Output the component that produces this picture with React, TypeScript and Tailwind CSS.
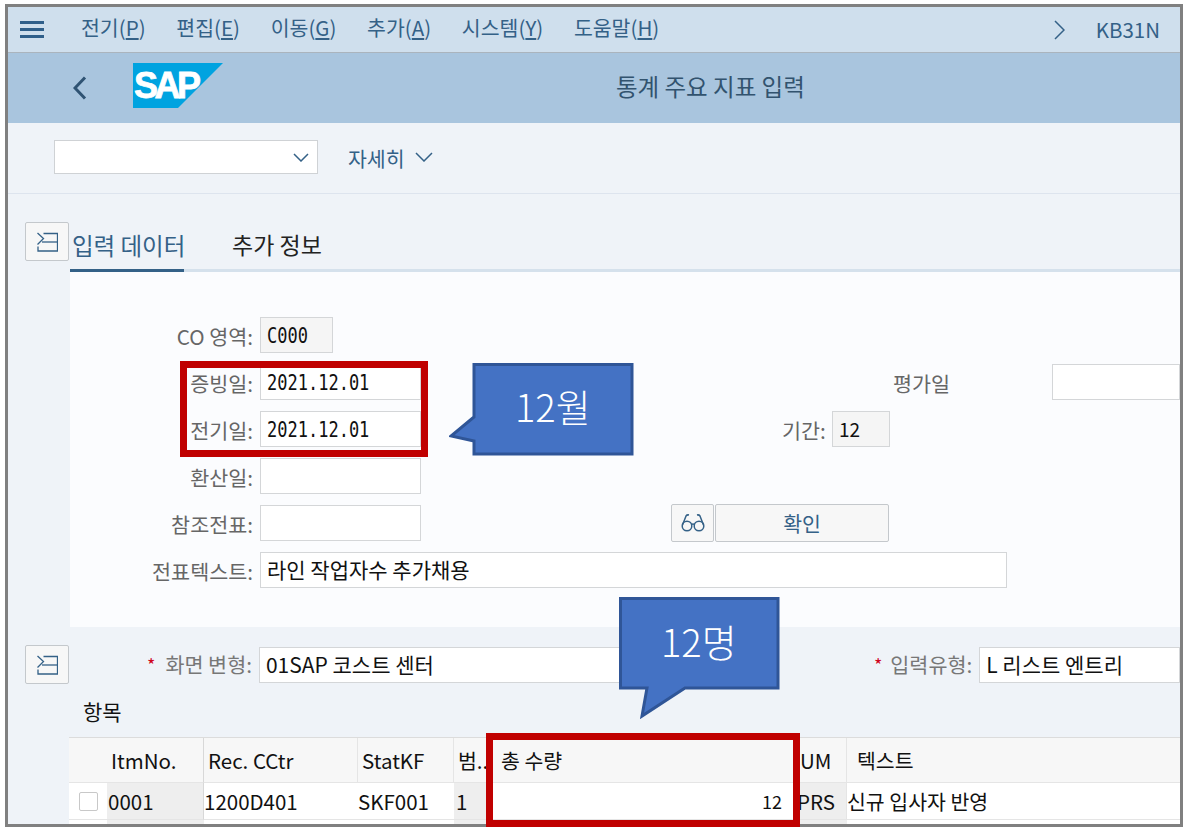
import React from "react";

const Toggle = () => (
  <button className="ml-[17px] flex h-[39px] w-[44px] shrink-0 items-center justify-center rounded-[2px] border border-[#c4c8cc] bg-[#f7f7f7]">
    <svg width="21" height="20" viewBox="0 0 21 20" fill="none" stroke="#346187" strokeWidth="1.3">
      <path d="M0.5 1L6.5 6.5L0.5 12.5" />
      <path d="M6.5 1.5H20.5V19H1V14.5" />
      <path d="M5 10H20.5" />
    </svg>
  </button>
);

const Label = ({ children, w = "w-[183px]" }: { children: React.ReactNode; w?: string }) => (
  <span className={`${w} shrink-0 whitespace-nowrap pt-[3px] text-right text-[20.7px] leading-none text-[#666666]`}>{children}</span>
);

const Input = ({ children, w, ro, mono }: { children?: React.ReactNode; w: string; ro?: boolean; mono?: boolean }) => (
  <div
    className={`${w} ml-[7px] flex h-[36px] shrink-0 items-center overflow-hidden border border-[#d4d6d8] px-[6px] text-[#111111] ${ro ? "bg-[#f5f5f5]" : "bg-white"} ${
      mono ? "font-['DejaVu_Sans_Mono',monospace] text-[17px]" : "text-[21px]"
    }`}
  >
    {mono ? <span className="inline-block translate-y-[2px] scale-y-[1.25]">{children}</span> : children}
  </div>
);

const Menu = ({ name, k }: { name: string; k: string }) => (
  <span className="whitespace-nowrap">
    {name}(<span className="underline">{k}</span>)
  </span>
);

const Chevron = ({ w, h, c = "#346187", sw = 1.5 }: { w: number; h: number; c?: string; sw?: number }) => (
  <svg width={w} height={h} viewBox={`0 0 ${w} ${h}`} fill="none" stroke={c} strokeWidth={sw}>
    <path d={`M1 1L${w / 2} ${h - 1}L${w - 1} 1`} />
  </svg>
);

const Cell = ({ children, cls = "" }: { children?: React.ReactNode; cls?: string }) => (
  <div className={`flex items-center overflow-hidden whitespace-nowrap border-b border-[#e5e5e5] ${cls}`}>{children}</div>
);

const Callout = ({ cls, w, h, points, text, textCls }: { cls: string; w: number; h: number; points: string; text: string; textCls: string }) => (
  <div className={`absolute ${cls}`} style={{ width: w, height: h }}>
    <svg width={w} height={h} className="absolute left-0 top-0">
      <polygon points={points} fill="#4472c4" stroke="#2f5597" strokeWidth="3" />
    </svg>
    <span className={`absolute whitespace-nowrap text-[38px] font-light leading-none text-white ${textCls}`}>{text}</span>
  </div>
);

export default function App() {
  return (
    <div className="relative h-[829px] w-[1184px] overflow-hidden bg-white pb-[2px] pl-[5px] pr-[1px] pt-[4px] font-['Noto_Sans_CJK_KR','Noto_Sans',sans-serif]">
      <div className="flex h-full flex-col overflow-hidden border-[3px] border-[#808080] bg-[#eff3f8]">
        {/* menu bar */}
        <div className="flex h-[46px] shrink-0 items-center border-b border-[#aab4bd] bg-[#cfdfed] text-[20.5px] text-[#346187]">
          <div className="ml-[12px] flex h-[17px] w-[24px] flex-col justify-between">
            <div className="h-[3px] bg-[#2f5f8a]" />
            <div className="h-[3px] bg-[#2f5f8a]" />
            <div className="h-[3px] bg-[#2f5f8a]" />
          </div>
          <div className="ml-[37px] flex gap-[30.7px] pb-[5px]">
            <Menu name="전기" k="P" />
            <Menu name="편집" k="E" />
            <Menu name="이동" k="G" />
            <Menu name="추가" k="A" />
            <Menu name="시스템" k="Y" />
            <Menu name="도움말" k="H" />
          </div>
          <svg className="ml-auto" width="11" height="20" viewBox="0 0 11 20" fill="none" stroke="#346187" strokeWidth="1.5">
            <path d="M1 1l9 9-9 9" />
          </svg>
          <span className="ml-[31px] mr-[20px] text-[20.5px]">KB31N</span>
        </div>
        {/* title bar */}
        <div className="flex h-[70px] shrink-0 items-center bg-[#a9c5de]">
          <svg className="ml-[65px]" width="14" height="24" viewBox="0 0 14 24" fill="none" stroke="#2f5373" strokeWidth="3">
            <path d="M12 1.5L2 12l10 10.5" />
          </svg>
          <svg className="ml-[46px] mb-[5px]" width="90" height="45" viewBox="0 0 90 45">
            <polygon points="0,0 90,0 45,45 0,45" fill="#00a3e0" />
            <text x="1" y="35" fontFamily="'Liberation Sans',sans-serif" fontWeight="700" fontSize="36" letterSpacing="-3.5" stroke="#ffffff" strokeWidth="0.8" fill="#ffffff">SAP</text>
          </svg>
          <span className="mb-[2px] ml-[393px] whitespace-nowrap text-[23.5px] text-[#32536e]">통계 주요 지표 입력</span>
        </div>
        {/* toolbar */}
        <div className="flex h-[71px] shrink-0 items-center border-b border-[#dde4ee] pb-[2px]">
          <div className="ml-[46px] flex h-[34px] w-[264px] items-center justify-end border border-[#cfd2d5] bg-white pr-[8px]">
            <Chevron w={16} h={9} />
          </div>
          <span className="ml-[30px] pt-[2px] text-[20.5px] text-[#346187]">자세히</span>
          <span className="ml-[10px]">
            <Chevron w={18} h={10} />
          </span>
        </div>
        {/* form */}
        <div className="flex shrink-0 pt-[28px]">
          <div className="w-[62px] shrink-0">
            <Toggle />
          </div>
          <div className="min-w-0 flex-1">
            <div className="flex h-[50px] items-center border-b-[3px] border-[#d5e1ec] text-[23px]">
              <div className="-mb-[3px] flex h-[50px] w-[114px] items-center whitespace-nowrap border-b-[3px] border-[#346187] pl-[2px] text-[23.5px] text-[#346187]">입력 데이터</div>
              <div className="mb-[2px] ml-[48px] whitespace-nowrap text-[#222222]">추가 정보</div>
            </div>
            <div className="flex h-[355px] flex-col gap-[11px] bg-[#fbfcfe] pt-[45px]">
              <div className="flex h-[36px] items-center">
                <Label>CO 영역:</Label>
                <Input w="w-[73px]" ro mono>C000</Input>
              </div>
              <div className="flex h-[36px] items-center">
                <Label>증빙일:</Label>
                <Input w="w-[161px]" mono>2021.12.01</Input>
                <span className="ml-[472px] w-[55px] shrink-0 whitespace-nowrap pt-[3px] text-[20.7px] leading-none text-[#666666]">평가일</span>
                <div className="ml-[104px] h-[36px] flex-1 border border-[#d4d6d8] bg-white" />
              </div>
              <div className="flex h-[36px] items-center">
                <Label>전기일:</Label>
                <Input w="w-[161px]" mono>2021.12.01</Input>
                <span className="ml-[361px] w-[43px] shrink-0 whitespace-nowrap pt-[3px] text-[20.7px] leading-none text-[#666666]">기간:</span>
                <Input w="w-[58px]" ro>
                  <span className="text-[19px]">12</span>
                </Input>
              </div>
              <div className="flex h-[36px] items-center">
                <Label>환산일:</Label>
                <Input w="w-[161px]" />
              </div>
              <div className="flex h-[36px] items-center">
                <Label>참조전표:</Label>
                <Input w="w-[161px]" />
                <button className="ml-[250px] flex h-[38px] w-[43px] items-center justify-center rounded-[2px] border border-[#c4c8cc] bg-[#f7f7f7]">
                  <svg width="24" height="20" viewBox="0 0 24 20" fill="none" stroke="#346187" strokeWidth="1.5">
                    <circle cx="6" cy="13" r="4.8" />
                    <circle cx="18" cy="13" r="4.8" />
                    <path d="M10.5 11.5q1.5-1 3 0" />
                    <path d="M1.5 12L5 3q1-1.5 3-1" />
                    <path d="M22.5 12L19 3q-1-1.5-3-1" />
                  </svg>
                </button>
                <button className="ml-[1px] flex h-[38px] w-[174px] items-center justify-center rounded-[2px] border border-[#c4c8cc] bg-[#f7f7f7] text-[20.5px] text-[#346187]">확인</button>
              </div>
              <div className="flex h-[36px] items-center">
                <Label>전표텍스트:</Label>
                <Input w="w-[747px]">라인 작업자수 추가채용</Input>
              </div>
            </div>
          </div>
        </div>
        {/* lower */}
        <div className="flex shrink-0 items-center pt-[18px]">
          <Toggle />
          <div className="ml-[78px] flex shrink-0 items-center">
            <span className="mr-[10px] text-[18px] leading-none text-[#d0021b]">*</span>
            <span className="whitespace-nowrap text-[20.7px] text-[#777777]">화면 변형:</span>
          </div>
          <Input w="w-[440px]">01SAP 코스트 센터</Input>
          <div className="ml-[175px] flex shrink-0 items-center">
            <span className="mr-[8px] text-[18px] leading-none text-[#d0021b]">*</span>
            <span className="whitespace-nowrap text-[20.7px] text-[#777777]">입력유형:</span>
          </div>
          <Input w="w-[201px]">L 리스트 엔트리</Input>
        </div>
        <div className="ml-[75px] mt-[13px] h-[40px] shrink-0 text-[21px] leading-[28px] text-[#111111]">항목</div>
        <div className="ml-[61px] grid grid-cols-[38px_97px_154px_96px_36px_305px_52px_1fr] grid-rows-[45px_37px_8px] border-t border-[#dcdcdc] bg-white text-[20.5px] text-[#111111]">
          <Cell cls="bg-[#f7f7f7]" />
          <Cell cls="border-r border-r-[#d8d8d8] bg-[#f7f7f7] pl-[4px]">ItmNo.</Cell>
          <Cell cls="border-r border-r-[#e5e5e5] bg-[#f7f7f7] pl-[4px]">Rec. CCtr</Cell>
          <Cell cls="border-r border-r-[#e5e5e5] bg-[#f7f7f7] pl-[4px]">StatKF</Cell>
          <Cell cls="bg-[#f7f7f7] pl-[4px]">범..</Cell>
          <Cell cls="bg-[#f7f7f7] pl-[11px]">총 수량</Cell>
          <Cell cls="border-r border-r-[#e5e5e5] bg-[#f7f7f7] pl-[5px]">UM</Cell>
          <Cell cls="bg-[#f7f7f7] pl-[10px]">텍스트</Cell>

          <Cell cls="justify-center">
            <div className="h-[19px] w-[19px] rounded-[2px] border border-[#c8c8c8] bg-white" />
          </Cell>
          <Cell cls="border-r border-r-[#d8d8d8] bg-[#eeeeee] pl-[1px]">0001</Cell>
          <Cell>1200D401</Cell>
          <Cell>SKF001</Cell>
          <Cell cls="bg-[#eeeeee] pl-[2px]">1</Cell>
          <Cell cls="justify-end pr-[13px] text-[18px]">12</Cell>
          <Cell cls="border-r border-r-[#e5e5e5] bg-[#eeeeee] pl-[2px]">PRS</Cell>
          <Cell>신규 입사자 반영</Cell>

          <div />
          <div className="bg-[#eeeeee]" />
          <div />
          <div />
          <div className="bg-[#eeeeee]" />
          <div />
          <div className="bg-[#eeeeee]" />
          <div />
        </div>
      </div>

      {/* overlays */}
      <div className="absolute left-[180px] top-[361px] h-[96px] w-[248px] border-x-[7px] border-y-[7px] border-[#c00000]" />
      <div className="absolute left-[486px] top-[733px] h-[94px] w-[314px] border-[7px] border-[#c00000]" />
      <Callout cls="left-[449px] top-[362px]" w={186} h={95} points="25,2.5 183,2.5 183,92 25,92 25,79 2,74 25,55" text="12월" textCls="left-[66px] top-[25px]" />
      <Callout cls="left-[618px] top-[596px]" w={163} h={124} points="2.5,2.5 160,2.5 160,92 67,92 24,120 29,92 2.5,92" text="12명" textCls="left-[43px] top-[26px]" />
    </div>
  );
}
